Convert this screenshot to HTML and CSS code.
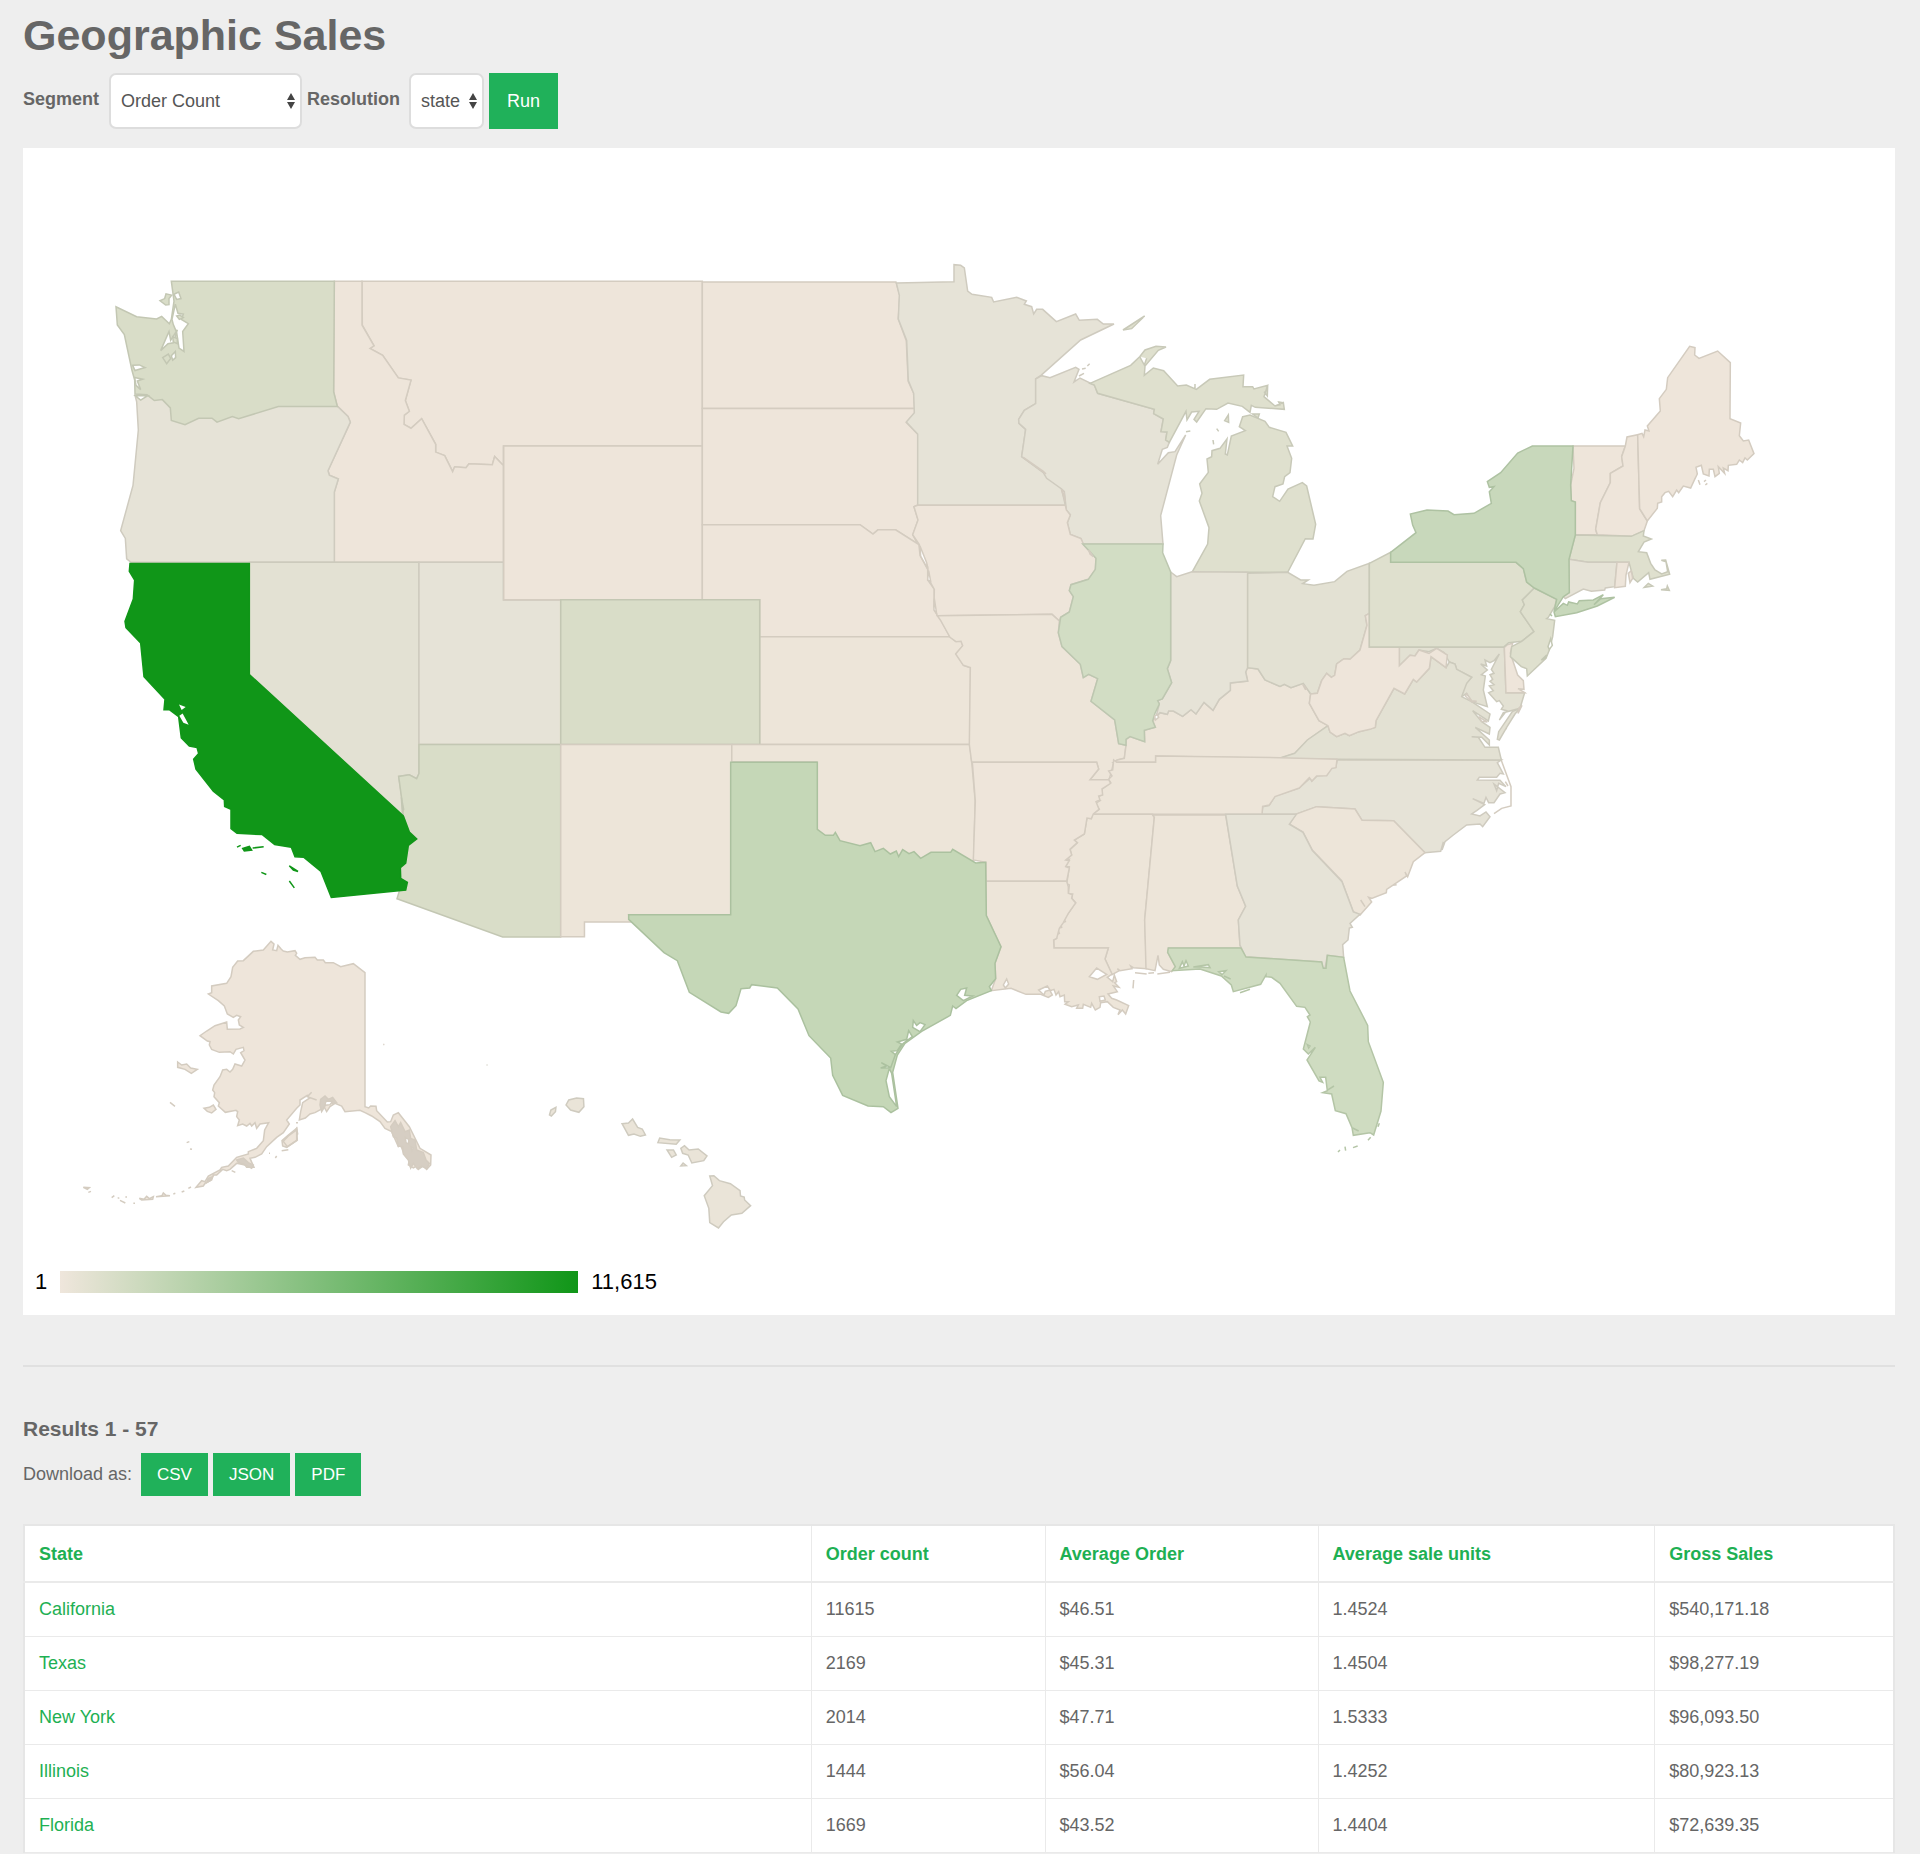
FILE: index.html
```html
<!DOCTYPE html>
<html lang="en">
<head>
<meta charset="utf-8">
<title>Geographic Sales</title>
<link rel="stylesheet" href="styles.css">
</head>
<body>
<main class="page">
  <h1 class="page-title">Geographic Sales</h1>

  <form class="filters">
    <label class="filter-label label-segment" for="segment">Segment</label>
    <span class="select-wrap select-wide">
      <select id="segment" class="select"><option>Order Count</option></select>
      <svg class="select-arrows" viewBox="0 0 8 16" aria-hidden="true"><path d="M0 7L4 0 8 7ZM0 9H8L4 16Z"/></svg>
    </span>
    <label class="filter-label label-resolution" for="resolution">Resolution</label>
    <span class="select-wrap select-narrow">
      <select id="resolution" class="select"><option>state</option></select>
      <svg class="select-arrows" viewBox="0 0 8 16" aria-hidden="true"><path d="M0 7L4 0 8 7ZM0 9H8L4 16Z"/></svg>
    </span>
    <button type="button" class="btn btn-run">Run</button>
  </form>

  <section class="map-panel">
    <svg class="map" viewBox="23 148 1872 1104" role="img" aria-label="Order count by state">
      <!-- West -->
      <g transform="translate(100 250) scale(.33333 .43367)">
        <path class="s0" d="M786 72H1807V452H1210V497L1184 476 1177 495 1107 493 1098 502 1064 500 1058 511 1034 474 1007 466 1007 448 965 389 933 411 912 402 913 381 928 372 916 347 933 300 895 295 848 243 810 227 822 221 787 173Z"/>
        <path class="s0" d="M703 72H786V173L822 221 810 227 848 243 895 295 933 300 916 347 928 372 913 381 912 402 933 411 965 389 1007 448 1007 466 1034 474 1058 511 1064 500 1098 502 1107 493 1177 495 1184 476 1210 497V720H703V558L715 528 688 519 684 509 751 397 744 384 712 360 701 327Z"/>
        <path class="s2" d="M105 335L300 335 712 360 744 384 751 397 684 509 688 519 715 528 703 558V720H93L80 712 76 665 62 647 99 543 115 415 110 350Z"/>
        <path class="s6" d="M214 72H703L701 327 712 361 535 361 416 389 397 384 351 397 336 388 296 388 255 403 214 393 211 364 187 345 163 347 141 334 105 332 104 300 96 278 73 195 52 173 48 131 110 154 170 159 185 153 208 170 214 160 222 118Z"/>
        <path class="w6" d="M216 160L226 125 234 146 250 148 244 160 265 170 248 188 252 234 237 226 230 190 220 172ZM182 232L207 188 212 208 232 184 220 214 204 216ZM222 102L236 97 243 112 230 114ZM214 244L226 234 227 248 218 254ZM98 266L118 265 135 271 105 278ZM104 294L128 298 112 302 122 322 108 312ZM106 336L143 336 122 346Z"/>
        <path class="s6" d="M180 117L194 112 198 101 215 104 207 112 207 126 197 127ZM188 248L205 240 212 250 200 262ZM218 200L232 204 232 216 220 212ZM230 152L240 150 250 156 238 160Z"/>
        <path class="s3" d="M448 720H957V1207L950 1219 928 1210 896 1214 911 1290 910 1305 448 979Z"/>
        <path class="s2" d="M957 720H1210V807H1382V1140H957Z"/>
        <path class="s6" d="M957 1140H1382V1584H1208L891 1496 899 1476 917 1476 922 1458 902 1449 901 1424 917 1414 925 1373 950 1358 928 1342 910 1305 905 1265 896 1214 928 1210 950 1219 957 1207Z"/>
        <path class="w6" d="M904 1262L911 1290 907 1296Z"/>
        <path class="ca" d="M90 723H448V979L910 1305 928 1342 950 1358 925 1373 917 1414 901 1424 902 1449 922 1458 917 1476 694 1493 663 1433 611 1400 585 1399 574 1377 524 1371 487 1348 411 1345 393 1334 393 1290 374 1283 373 1268 340 1248 288 1197 281 1174 296 1161 291 1147 268 1144 244 1125 236 1076 208 1060 192 1060 195 1036 132 984 122 906 78 871 75 856 100 805 104 761 88 741ZM411 1377L422 1373M428 1380L448 1375 455 1384 433 1386ZM458 1379L491 1376M484 1435L499 1440M568 1420L594 1433 580 1430ZM568 1455L583 1471"/>
        <path class="hole" d="M237 1048L257 1054 245 1061ZM238 1074L248 1069 266 1095 250 1090Z"/>
      </g>
      <!-- Plains -->
      <g transform="translate(480 260) scale(.38265 .42092)">
        <path class="s0" d="M62 442H581V807H62Z"/>
        <path class="s0" d="M581 52H1087L1097 84 1093 140 1114 192 1119 288 1133 316 1136 353H581Z"/>
        <path class="s0" d="M581 353H1136L1136 364 1114 386 1144 414V582L1134 586 1145 618 1131 653 1144 675 1086 641 1040 641 1027 651 993 629H581Z"/>
        <path class="s0" d="M581 629H993L1027 651 1040 641 1086 641 1147 676 1150 702 1170 735 1170 760 1187 782 1188 832 1205 856 1228 895H731V807H581Z"/>
        <path class="s1" d="M731 895H1228L1243 906 1258 906 1262 917 1244 935 1264 963 1282 969 1280 1151H731Z"/>
        <path class="s6" d="M211 807H731V1151H211Z"/>
        <path class="s1" d="M211 1151H658V1556H389L400 1573H273V1608H211Z"/>
        <path class="s1" d="M658 1151H1280L1285 1192 1294 1284 1290 1427 1200 1430 880 1420V1192H658Z"/>
      </g>
      <!-- Great Lakes and upper Midwest -->
      <g transform="translate(880 250) scale(.33333)">
        <path class="s2" d="M49 99L222 95V44L242 46 253 54 263 123 276 133 335 142 341 156 410 142 439 153 433 163 455 170 461 192 470 178 488 178 529 215 587 192 598 211 652 208 670 222 702 222 602 270 483 376 467 387V461L433 481 416 508 417 520 437 538 425 620 498 672 545 717 556 766H113V552L79 516 103 488 101 430 85 392 80 271 55 207 58 136Z"/>
        <path class="s2" d="M467 387L485 377 510 383 587 352 597 358 582 396 600 384 643 405 653 430 823 478 821 491 850 507 843 545 861 546 857 570 868 577 862 592 847 598 833 643 865 608 885 605 917 555 890 615 842 797 849 882H608L603 866 571 853 562 818 571 795 559 780 553 725 545 717 500 685 490 668 425 620 437 538 417 520 416 508 433 481 467 461ZM597 378L612 370M606 357L617 355M622 348L629 341"/>
        <path class="w2" d="M430 622L490 664 498 672ZM544 718L552 726 556 756Z"/>
        <path class="s5" d="M630 400L752 346 779 320 795 300 828 289 858 291 835 301 795 348 793 376 820 354 851 362 893 408 919 405 949 418 989 388 1091 375 1089 410 1118 410 1122 417 1163 406 1152 440 1185 468 1210 458 1213 478 1126 472 1114 466 1110 487 1087 469 1044 459 1010 478 978 476 950 516 942 508 957 484 935 486 921 510 918 484 868 577 857 570 861 546 843 545 850 507 821 491 823 478 653 430 643 405ZM729 240L794 198 755 236ZM1034 512L1045 495 1046 517ZM1010 536L1016 544M999 570L1001 583M918 545L931 543M945 402V416M779 320L793 345 800 325M1163 406L1162 438 1152 425M1118 492H1138L1134 504ZM1184 468L1200 464 1196 456 1210 458"/>
        <path class="s5" d="M1088 500L1110 495 1155 514 1168 532 1218 547 1238 588 1221 588 1235 625 1230 668 1214 680 1209 702 1185 710 1178 740 1199 754 1224 717 1267 698 1280 708 1307 823 1299 867 1276 866 1223 967H936L983 882 987 833 958 753 966 730 959 702 985 667 981 627 995 620 996 602 1020 595 1041 567 1036 612 1042 615 1054 558 1096 542 1078 530Z"/>
        <path class="s0" d="M113 766H556L559 780 571 795 562 818 571 853 603 866 612 885 648 925 646 958 625 988 573 1004 568 1022 580 1040 568 1086 542 1102 538 1113 516 1093 172 1097 162 1070 163 1018 147 990 143 950 122 905 118 884 98 854 114 810 102 770Z"/>
        <path class="w0" d="M120 888L122 918 143 956 140 938ZM146 962L143 990 152 994ZM163 1046L162 1080 170 1092Z"/>
        <path class="s1" d="M172 1097L516 1093 538 1113 535 1148 546 1190 601 1243 610 1283 626 1273 653 1286 633 1354 704 1410 716 1481 738 1486 733 1525 712 1530 701 1537 695 1562 687 1589H630L656 1557 650 1537H275L268 1484 271 1253 250 1246 227 1212 248 1187 243 1174 228 1175 210 1162 181 1110Z"/>
        <path class="s1" d="M738 1486L738 1468 750 1460 794 1475 793 1441 826 1432 818 1412 828 1400 840 1388 862 1393 866 1383 880 1383 908 1399 933 1379 948 1392 972 1357 999 1381 1018 1348 1051 1321 1051 1299 1103 1293 1097 1266 1103 1253 1134 1257 1155 1290 1200 1309 1213 1303 1233 1313 1270 1300 1292 1332 1288 1360 1317 1412 1344 1427 1282 1471 1246 1510 1202 1525 827 1518V1537H701L712 1530 733 1525Z"/>
        <path class="s2" d="M872 966L890 980 936 965 1103 967V1253L1097 1266 1103 1293 1051 1299 1051 1321 1018 1348 999 1381 972 1357 948 1392 933 1379 908 1399 880 1383 866 1383 862 1393 840 1388 828 1400 838 1362 833 1352 847 1347 875 1298 862 1256 872 1232Z"/>
        <path class="il" d="M608 882H849L848 908 872 966V1232L862 1256 875 1298 847 1347 833 1352 838 1362 825 1390 818 1412 826 1432 793 1441 794 1475 750 1460 738 1468 738 1486 716 1481 704 1410 633 1354 653 1286 626 1273 610 1283 601 1243 546 1190 535 1148 542 1102 568 1086 580 1040 568 1022 573 1004 625 988 646 958 648 925Z"/>
        <path class="s3" d="M1103 970L1223 967 1262 990 1285 990 1268 1001 1302 1006 1364 995 1401 964 1468 940V1090L1456 1097 1461 1126 1440 1200 1410 1228 1392 1226 1370 1242 1364 1276 1354 1282 1340 1270 1325 1292 1312 1330 1292 1332 1270 1300 1233 1313 1213 1303 1200 1309 1155 1290 1134 1257 1103 1253Z"/>
        <path class="w0" d="M824 1398L832 1394 836 1402 826 1410ZM1268 1303L1280 1316 1276 1318ZM626 900L640 920 630 912Z"/>
      </g>
      <!-- Mid-Atlantic -->
      <g transform="translate(1290 640) scale(.33333)">
        <path class="s2" d="M634 360L622 368 640 402 630 400 620 412 568 412 562 420 630 421 648 440 626 430 620 452 612 432 645 458 630 462 612 488 596 488 588 472 582 490 548 476 584 494 560 512 545 522 570 528 588 516 600 530 578 560 570 552 530 555 490 585 465 605 456 630 460 606 452 634 405 638 311 542 216 541 195 507 80 500 16 523H-84L-82 500 -63 497 -45 468 27 444 62 413 65 423 82 407 110 405 123 384 137 382 142 359Z"/>
        <path class="line" d="M628 345L663 440V498L635 505 612 521M646 425L654 438"/>
        <path class="s1" d="M16 523L80 500 195 507 216 541 311 542 405 638 370 665 353 710 345 696 350 708 290 748 289 758 245 775 236 772 245 786 210 825 190 815 155 722 67 630 39 576 -2 552ZM212 780L225 800M308 736L320 734"/>
        <path class="s3" d="M328 22H643L648 158H704L690 205 640 218 628 240 650 212 634 208 640 198 628 182 620 185 596 158 610 152 598 138 612 134 600 124 608 118 600 104 612 100 604 88 628 42 612 62 600 68 585 60 590 78 572 72 592 90 574 104 586 108 580 150 592 200 545 185 530 160 515 170 520 140 545 112 500 88 495 72 478 66 462 38 440 25 417 35 387 30 375 48 360 46 328 77Z"/>
        <path class="s3" d="M-30 354L14 340 52 300 114 257 120 276 140 290 165 280 178 287 207 275 256 262 258 242 312 145 344 162 370 118 380 126 418 85 423 50 468 83 478 66 495 72 500 88 545 112 530 130 515 170 545 185 600 222 595 243 548 212 575 245 600 262 598 282 556 262 598 300 598 315 575 292 545 290 565 292 585 322H625L634 360 -28 357ZM622 298L626 275 667 215 690 205 675 222 650 262 628 300ZM644 272L650 264"/>
        <path class="w2" d="M530 162L545 182 560 184 545 186 526 168ZM566 230L592 246 575 244ZM686 205L696 196 684 220Z"/>
        <path class="s0" d="M238 -80L226 -73 231 -44 210 30 180 58 162 56 140 72 134 106 124 112 110 100 95 122 82 160 62 162 58 190 87 242 114 257 120 276 140 290 165 280 178 287 207 275 240 268 256 262 258 242 312 145 344 162 370 118 380 126 418 85 423 50 468 83 472 45 440 25 417 40 387 30 375 48 360 46 328 77V22H238Z"/>
        <path class="s0" d="M643 22L652 14 668 10 661 40 683 105 700 122 702 148 684 146 704 158H648Z"/>
      </g>
      <!-- Northeast -->
      <g transform="translate(1300 330) scale(.33333)">
        <path class="s5" d="M208 700L272 667V697H648L670 716 680 756 703 774 667 810 673 824 661 845 702 905 665 934 626 938 611 951H208Z"/>
        <path class="s5" d="M703 774L770 808 764 830 745 862 740 866 764 871 758 920 748 960 738 985 682 1038 680 1016 664 1010 631 980 635 950 665 934 702 905 661 845 673 824 667 810Z"/>
        <path class="w6" d="M752 926L757 946 748 958 744 950ZM724 990L740 975 736 985Z"/>
        <path class="s0" d="M819 348H976L965 380 969 408 931 430 931 458 901 518 887 598 892 614H826V516L814 512 812 465 822 415Z"/>
        <path class="s0" d="M976 348L981 321 1013 314 1019 536 1042 573 1032 602 994 619 892 614 887 598 901 518 931 458 931 430 969 408 965 380Z"/>
        <path class="s0" d="M1013 314L1026 310 1031 320 1035 300 1047 303 1042 288 1081 243 1078 206 1099 178 1103 143 1169 49 1185 53 1184 75 1197 85 1253 63 1291 98 1290 266 1322 279 1318 317 1330 333 1346 330 1362 371 1342 390 1335 384 1328 398 1318 390 1310 403 1285 406 1284 422 1270 414 1274 430 1255 410 1258 430 1245 440 1240 418 1228 418 1227 438 1210 432 1204 406 1188 412 1192 432 1184 448 1172 474 1150 468 1136 488 1130 480 1118 500 1106 484 1095 488 1085 500 1085 516 1073 520 1072 535 1042 573 1019 536ZM1195 450L1200 464M1216 465L1222 460M1212 455L1218 450"/>
        <path class="s5" d="M826 615L994 619 1032 602 1030 618 1054 627 1032 636 1015 665 1040 668 1052 700 1065 720 1085 732 1103 725 1098 695 1084 691 1097 690 1109 733 1050 748 1046 728 1013 756 1000 745 987 697 951 697 864 697 807 688ZM1033 772L1045 760 1058 768ZM1083 779L1100 776 1102 768 1108 781Z"/>
        <path class="s2" d="M807 688L864 697 951 697 944 770 916 774 914 780 874 784 850 777 796 806 790 800 808 788Z"/>
        <path class="s0" d="M951 697H987L978 735 976 769 944 773ZM985 730L994 722 998 745 990 758Z"/>
        <path class="ny" d="M272 667L348 608 338 585 331 552 381 540 444 543 462 554 522 550 574 520 568 485 582 470 568 472 562 455 602 428 653 369 697 348H819L812 465 814 512 826 516V615L807 688 808 788 790 800 762 845 770 808 703 774 680 756 670 716 648 697H272ZM762 846L790 820 802 826 806 816 832 822 838 812 880 810 910 794 882 824 902 806 944 802 892 828 830 848 766 860ZM750 852L756 858"/>
      </g>
      <!-- South -->
      <g transform="translate(1020 700) scale(.33333)">
        <path class="s1" d="M217 343L238 328 227 310 240 302 228 298 235 290 246 285 246 267 272 248 266 238 276 228 266 213 278 210 281 180 290 187H407V168L780 173 951 178 948 203 936 205 920 227 890 228 876 243 868 233 838 264 765 290 748 315 728 319 726 343Z"/>
        <path class="s1" d="M217 343H398L403 352 374 660 380 806 340 803 332 798 336 806 300 812 292 806 298 812 276 824 255 777 265 744H102L101 720 110 715 106 705 118 700 112 685 125 682 122 670 136 665 130 655 145 640 155 625 145 628 167 608 155 595 158 582 145 582 148 555 138 550 141 545 148 500 137 500 148 478 137 480 155 465 150 448 172 428 163 420 193 402 201 354 214 356Z"/>
        <path class="s1" d="M398 345H617L652 558 677 619 655 660 660 735 663 744H445L443 757 466 800 455 815 430 808 418 795 414 766 405 812 378 806 374 660 403 352ZM345 818L380 822M385 820L402 818M412 822L450 817M341 840L339 865"/>
        <path class="s2" d="M617 343H829L808 373 849 397 877 452 966 545 1000 636 1020 643 990 670 997 682 988 684 984 720 968 734 971 772 922 766 915 805 908 805 905 786 676 770 660 735 655 660 677 619 652 558Z"/>
        <path class="fl" d="M445 744H663L678 771 905 786 910 805 918 805 922 766 971 772 990 873 1043 976 1045 1025 1090 1147 1083 1233 1061 1305 1050 1298 1000 1306 996 1283 978 1241 946 1232 935 1182 908 1178 922 1172 917 1132 900 1132 908 1147 897 1143 861 1080 886 1042 865 1062 850 1047 871 966 862 950 870 945 855 922 830 919 780 850 755 832 738 830 738 825 722 853 640 875 634 855 604 828 540 807 457 812 466 800 443 757ZM1052 1312L1044 1321M1013 1338L999 1343M975 1340L977 1352M960 1350L954 1356M1078 1270L1074 1280M920 1172L942 1158M998 1284L1016 1293M612 828L632 837M660 878L690 868"/>
        <path class="wf" d="M478 805L487 785 492 798 498 782 505 798ZM520 801L565 794 570 803 545 801ZM596 815L618 812 606 824ZM862 1034L870 1038 866 1044Z"/>
      </g>
      <!-- Texas and the lower Mississippi -->
      <g transform="translate(620 740) scale(.33333)">
        <path class="s0" d="M1057 67H1430L1436 87 1410 119H1466L1472 130 1446 147 1448 165 1436 168 1440 180 1428 185 1437 208 1420 222 1414 236 1401 234 1393 282 1363 300 1372 308 1350 328 1355 345 1337 360 1348 362 1337 380 1348 384 1340 424H1098V367L1060 360 1066 183Z"/>
        <path class="s1" d="M1098 424H1340L1345 440 1345 460 1357 464 1355 475 1367 489 1345 520 1330 548 1318 565 1310 595 1301 600 1302 624H1465L1455 657 1476 702 1462 712 1478 725 1483 705 1490 725 1484 728 1497 742 1480 738 1492 755 1464 762 1475 775 1490 780 1526 797 1517 822 1507 810 1494 824 1500 810 1480 802 1462 785 1442 788 1440 802 1426 810 1415 790 1412 802 1390 793 1388 805 1370 805 1375 795 1355 800 1335 793 1345 785 1334 785 1333 765 1320 770 1316 755 1308 765 1302 748 1290 752 1297 765 1285 772 1262 763 1218 763 1173 745 1114 752 1127 716 1125 670 1143 620 1099 527Z"/>
        <path class="w1" d="M1408 710L1430 684 1460 703 1432 718ZM1256 750L1282 738 1290 750 1276 754 1272 765ZM1150 735L1160 717 1166 732 1156 744ZM1438 770L1452 768 1456 780 1440 784Z"/>
        <path class="tx" d="M332 67H592V268L616 286 640 286 646 277 660 302 720 317 752 308 765 335 790 325 811 342 829 333 836 350 848 329 867 341 882 335 902 355 933 337 992 337 998 328 1067 369 1097 367 1099 527 1143 620 1125 670 1127 716 1108 740 1114 752 1040 782 1008 806 998 798 991 826 905 874 855 910 832 945 818 997 834 1105 813 1118 790 1100 744 1098 668 1066 638 1006 632 954 567 887 534 807 472 744 395 734 389 744 363 746 348 797 326 820 303 816 208 757 172 662 132 638 26 538V524H332Z"/>
        <path class="wt" d="M1010 766L1022 748 1040 744 1034 766 1058 768 1030 782ZM880 842L890 856 900 848 915 854 900 875 878 862ZM832 906L860 898 866 872 877 890 850 910 826 944 814 934 832 932 845 912ZM808 985L798 1022 808 1070 830 1100 815 1000ZM826 944L812 983 782 984 800 978 784 968 800 976 812 983Z"/>
      </g>
      <!-- Alaska -->
      <g transform="translate(70 930) scale(.33333)">
        <path class="s0" d="M603 34L612 42 608 60 620 62 624 46 634 58 640 63 652 66 675 62 680 70 676 76 690 88 705 83 735 82 742 90 760 90 766 98 790 98 812 110 850 101 885 128V530L896 534 902 528 918 529 920 542 952 576 962 575 970 555 985 548 1018 590 1050 655 1083 675 1082 705 1070 718 1060 708 1045 718 1040 708 1030 714 1015 705 1018 690 1002 672 992 645 985 650 965 605 945 595 930 575 905 558 885 548 870 541 825 545 815 528 795 520 780 530 770 545 762 530 750 540 735 548 720 552 706 564 688 570 692 545 698 518 725 500 712 496 690 510 690 525 680 535 650 570 658 582 640 608 620 622 590 650 575 672 555 682 540 685 552 712 530 712 525 705 500 700 480 718 470 722 458 718 440 735 430 735 425 750 405 760 400 768 378 772 395 752 405 755 415 738 450 720 455 712 475 708 500 682 535 672 535 665 560 655 580 632 584 600 596 578 570 582 560 595 555 578 545 588 540 580 530 588 518 582 503 587 508 570 500 560 503 545 498 541 466 547 445 528 448 518 432 500 434 488 428 480 432 465 450 440 458 420 470 418 480 426 488 418 495 402 515 408 525 390 512 368 522 362 520 352 498 358 490 372 480 365 448 367 425 358 418 345 420 335 412 333 390 317 410 303 435 287 470 276 472 298 510 297 520 292 508 285 505 270 512 260 500 256 490 262 472 252 463 228 445 212 415 192 425 188V168L470 160 483 140 488 112 503 93 520 92 550 64 580 60Z"/>
        <path class="ink" d="M962 590L975 572 985 590 992 578 1005 605 1018 600 1022 625 1035 630 1040 660 1060 668 1068 690 1078 700 1070 716 1055 708 1042 716 1030 700 1022 714 1015 690 1000 672 998 650 985 648 980 625 970 620ZM752 508L765 498 775 508 788 502 800 518 788 520 772 512 764 530 755 545 750 525ZM640 634L655 618 662 624 680 595 683 612 668 625 650 650 640 645ZM500 690L520 684 535 698 550 705 545 715 520 702 505 698ZM415 745L428 740 420 752 410 758Z"/>
        <path class="w0" d="M768 514L788 514 780 524 764 526ZM1006 622L1016 628 1016 642 1008 638ZM1022 650L1030 654 1026 662Z"/>
        <path class="s0" d="M636 632L655 615 680 595 680 632 650 652 638 648ZM323 396L335 405 350 402 362 414 382 418 364 430 345 418 323 412ZM402 535L418 532 430 525 438 538 425 549 412 544ZM300 517L315 529M350 638L358 635M360 657L366 658M940 343L943 344M616 684L620 678M597 670H600M635 662L655 659M678 578H684M40 772L58 773 52 778ZM55 787L63 784M125 803L133 797M143 803L148 805M166 801H171M150 811L166 819M190 820H195M208 805L222 808 230 799 238 806 250 800 248 808 215 810ZM258 800L276 797 280 789 288 796 300 797ZM310 792L316 790M335 786L343 783M355 775L363 771M725 487L712 500 740 510M485 722L496 727"/>
        <path class="line" d="M640 634L655 618 680 600 682 630 652 650Z"/>
      </g>
      <!-- Hawaii -->
      <g transform="translate(60 920) scale(.45918 .33333)">
        <path class="hi" d="M1066 585L1069 570 1080 562 1079 575 1070 588ZM1102 555L1108 540 1125 534 1140 536 1141 560 1130 577 1112 570ZM1224 611L1238 609 1247 597 1258 622 1268 627 1275 645 1264 649 1250 642 1238 646ZM1302 668L1306 654 1328 659 1350 660 1342 673ZM1322 690L1336 690 1342 705 1332 712ZM1352 685L1360 677 1370 690 1390 687 1409 708 1402 722 1376 729 1368 705 1356 700ZM1352 738L1357 729 1364 737ZM1415 768L1424 767 1436 782 1460 791 1481 812 1482 828 1490 831 1491 840 1504 857 1485 880 1462 885 1445 905 1434 924 1415 908 1413 865 1403 827 1421 797ZM929 435H931"/>
      </g>
    </svg>
    <div class="legend">
      <span>1</span>
      <span class="legend-bar"></span>
      <span>11,615</span>
    </div>
  </section>

  <hr class="divider">

  <section>
    <h2 class="results-title">Results 1 - 57</h2>
    <div class="downloads">
      <span class="downloads-label">Download as:</span>
      <button type="button" class="btn">CSV</button>
      <button type="button" class="btn">JSON</button>
      <button type="button" class="btn">PDF</button>
    </div>
    <table class="results">
      <colgroup><col class="col-state"><col class="col-count"><col class="col-average"><col class="col-units"><col class="col-gross"></colgroup>
      <thead>
        <tr><th><a href="#">State</a></th><th><a href="#">Order count</a></th><th><a href="#">Average Order</a></th><th><a href="#">Average sale units</a></th><th><a href="#">Gross Sales</a></th></tr>
      </thead>
      <tbody>
        <tr><td><a href="#">California</a></td><td>11615</td><td>$46.51</td><td>1.4524</td><td>$540,171.18</td></tr>
        <tr><td><a href="#">Texas</a></td><td>2169</td><td>$45.31</td><td>1.4504</td><td>$98,277.19</td></tr>
        <tr><td><a href="#">New York</a></td><td>2014</td><td>$47.71</td><td>1.5333</td><td>$96,093.50</td></tr>
        <tr><td><a href="#">Illinois</a></td><td>1444</td><td>$56.04</td><td>1.4252</td><td>$80,923.13</td></tr>
        <tr><td><a href="#">Florida</a></td><td>1669</td><td>$43.52</td><td>1.4404</td><td>$72,639.35</td></tr>
      </tbody>
    </table>
  </section>
</main>
</body>
</html>
```
FILE: styles.css
```css
* {
  box-sizing: border-box;
}

body {
  margin: 0;
  background: #eeeeee;
  color: #666666;
  font: 18px/24px "Liberation Sans", Arial, sans-serif;
}

a {
  color: #1eb053;
  text-decoration: none;
}

.page {
  padding: 11px 25px 0 23px;
}

.page-title {
  margin: 0 0 14px;
  font-size: 43px;
  line-height: 48px;
}

.filters {
  display: flex;
  align-items: center;
  gap: 5px;
  margin-bottom: 19px;
}

.filter-label {
  padding-bottom: 4px;
  font-weight: bold;
}

.label-segment {
  min-width: 81px;
}

.label-resolution {
  min-width: 97px;
}

.select-wrap {
  position: relative;
}

.select-wide {
  width: 193px;
}

.select-narrow {
  width: 75px;
}

.select {
  display: block;
  width: 100%;
  height: 56px;
  padding: 0 10px;
  border: 2px solid #dddddd;
  border-radius: 7px;
  background: #ffffff;
  color: #555555;
  font: inherit;
  appearance: none;
}

.select-arrows {
  position: absolute;
  top: 20px;
  right: 7px;
  width: 8px;
  height: 16px;
  fill: #444444;
  pointer-events: none;
}

.btn {
  height: 43px;
  padding: 0 16px;
  border: 0;
  background: #20b15a;
  color: #ffffff;
  font: 17px/24px "Liberation Sans", Arial, sans-serif;
}

.btn-run {
  height: 56px;
  padding: 0 18px;
  font-size: 18px;
}

.map-panel {
  padding-bottom: 21px;
  background: #ffffff;
}

.map {
  display: block;
  width: 100%;
  stroke-width: 1.5px;
}

.map path {
  fill: #eee5da;
  stroke: #d4ccc0;
  vector-effect: non-scaling-stroke;
}

.map .s1 { fill: #ede5d9; }
.map .s2 { fill: #e6e3d7; stroke: #cfcbbf; }
.map .s3 { fill: #e3e1d3; stroke: #cccabc; }
.map .s5 { fill: #dfe0ce; stroke: #c8c9b8; }
.map .s6 { fill: #d9ddc8; stroke: #c3c7b3; }
.map .il { fill: #d2ddc4; stroke: #bdc7b0; }
.map .fl { fill: #cfdcc1; stroke: #b4c5a6; }
.map .ny { fill: #c8d8bb; stroke: #aec2a2; }
.map .tx { fill: #c5d7b7; stroke: #abc19f; }
.map .ca { fill: #109618; stroke: #109618; }
.map .hi { fill: #eae4d8; stroke: #cfcbbf; }
.map .ink { fill: #d6cec3; }
.map .line { fill: none; }
.map .hole { fill: #ffffff; stroke: none; }
.map .w0,
.map .w1,
.map .w2 { fill: #ffffff; }
.map .w6 { fill: #ffffff; stroke: #c3c7b3; }
.map .wf { fill: #ffffff; stroke: #b4c5a6; }
.map .wt { fill: #ffffff; stroke: #abc19f; }

.legend {
  display: flex;
  align-items: center;
  gap: 13px;
  height: 42px;
  padding-top: 17px;
  padding-left: 12px;
  color: #000000;
  font-size: 22px;
}

.legend-bar {
  width: 518px;
  height: 22px;
  background: linear-gradient(to right, #efe6dc, #109618);
}

.divider {
  height: 2px;
  margin: 50px 0;
  border: 0;
  background: #e0e0e0;
}

.results-title {
  margin: 0 0 12px;
  font-size: 21px;
  line-height: 24px;
}

.downloads {
  display: flex;
  align-items: center;
  gap: 5px;
  margin-bottom: 28px;
}

.downloads-label {
  min-width: 113px;
  padding-bottom: 2px;
}

.results {
  width: 100%;
  table-layout: fixed;
  border-collapse: collapse;
  border: 2px solid #e6e6e6;
  border-bottom-width: 1px;
  background: #ffffff;
  text-align: left;
}

.results th,
.results td {
  height: 54px;
  padding: 0 14px;
  border: 1px solid #eaeaea;
}

.results th {
  height: 57px;
  border-bottom: 2px solid #eaeaea;
}

.col-state { width: 42.1%; }
.col-count { width: 12.5%; }
.col-average { width: 14.6%; }
.col-units { width: 18%; }
.col-gross { width: 12.8%; }
```
